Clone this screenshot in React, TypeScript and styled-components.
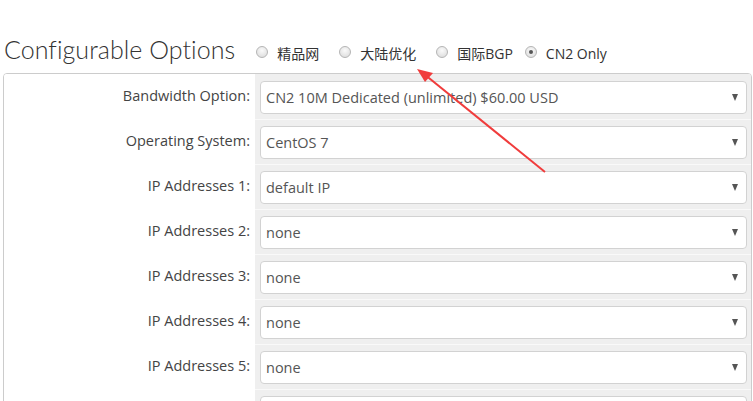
import styled, { createGlobalStyle } from "styled-components";

const GlobalStyle = createGlobalStyle`
  html, body {
    margin: 0;
    padding: 0;
    background: #fff;
    overflow: hidden;
  }
  body {
    font-family: "Open Sans", "Noto Sans CJK SC", sans-serif;
    font-size: 14px;
    color: #333;
  }
`;

const Page = styled.div`
  position: relative;
  width: 753px;
  height: 401px;
  overflow: hidden;
`;

const Header = styled.div`
  display: flex;
  align-items: baseline;
  padding: 37px 0 0 4px;
  height: 73px;
  box-sizing: border-box;
`;

const Title = styled.h3`
  margin: 0 21px 0 0;
  font-family: "Lato", "Liberation Sans", sans-serif;
  font-weight: 300;
  font-size: 25px;
  letter-spacing: 0.05px;
  color: #333;
  line-height: 1;
`;

const RadioLabel = styled.label<{ $gap: number }>`
  display: inline-block;
  margin-right: ${(p) => p.$gap}px;
  font-family: "Open Sans", "Noto Sans CJK SC", sans-serif;
  font-size: 14px;
  color: #333;
  white-space: nowrap;
`;

const RadioDot = styled.span<{ $checked?: boolean }>`
  position: relative;
  display: inline-block;
  vertical-align: 1px;
  width: 12px;
  height: 12px;
  margin-right: 9px;
  box-sizing: border-box;
  border-radius: 50%;
  border: 1px solid #b5b5b5;
  background: radial-gradient(circle at 50% 35%, #fafafa 0%, #dcdcdc 90%);
  &::after {
    content: "";
    position: absolute;
    left: 3px;
    top: 3px;
    width: 4px;
    height: 4px;
    border-radius: 50%;
    background: ${(p) => (p.$checked ? "#555" : "transparent")};
  }
`;

const Panel = styled.div`
  margin: 0 1px 0 3px;
  border: 1px solid #ccc;
  border-radius: 4px;
  display: grid;
  grid-template-columns: 251px 1fr;
  overflow: hidden;
`;

const LabelCell = styled.div`
  height: 45px;
  box-sizing: border-box;
  display: flex;
  align-items: center;
  justify-content: flex-end;
  padding: 0 5px 2px 0;
  background: #fff;
  color: #444;
  font-size: 14.5px;
`;

const FieldCell = styled.div<{ $first?: boolean }>`
  height: 45px;
  box-sizing: border-box;
  background: #efefef;
  border-top: 1px solid ${(p) => (p.$first ? "#efefef" : "#f9f9f9")};
  padding: 6px 4px 0 5px;
`;

const Select = styled.div`
  height: 33px;
  box-sizing: border-box;
  background: #fff;
  border: 1px solid #d2d2d2;
  border-radius: 4px;
  display: flex;
  align-items: center;
  justify-content: space-between;
  padding: 0 8px 0 5px;
  color: #555;
  font-size: 14.5px;
`;

const Caret = styled.span`
  width: 0;
  height: 0;
  border-left: 3.5px solid transparent;
  border-right: 3.5px solid transparent;
  border-top: 7px solid #555;
`;

const ArrowOverlay = styled.svg`
  position: absolute;
  left: 0;
  top: 0;
  pointer-events: none;
`;

const radios = [
  { label: "精品网", gap: 20 },
  { label: "大陆优化", gap: 20 },
  { label: "国际BGP", gap: 12 },
  { label: "CN2 Only", gap: 0, checked: true },
];

const rows = [
  { label: "Bandwidth Option:", value: "CN2 10M Dedicated (unlimited) $60.00 USD" },
  { label: "Operating System:", value: "CentOS 7" },
  { label: "IP Addresses 1:", value: "default IP" },
  { label: "IP Addresses 2:", value: "none" },
  { label: "IP Addresses 3:", value: "none" },
  { label: "IP Addresses 4:", value: "none" },
  { label: "IP Addresses 5:", value: "none" },
  { label: "", value: "" },
];

const App = () => {
  return (
    <Page>
      <GlobalStyle />
      <Header>
        <Title>Configurable Options</Title>
        {radios.map((r) => (
          <RadioLabel key={r.label} $gap={r.gap}>
            <RadioDot $checked={r.checked} />
            {r.label}
          </RadioLabel>
        ))}
      </Header>
      <Panel>
        {rows.map((row, i) => [
          <LabelCell key={i + "l"}>{row.label}</LabelCell>,
          <FieldCell key={i + "f"} $first={i === 0}>
            <Select>
              {row.value}
              <Caret />
            </Select>
          </FieldCell>,
        ])}
      </Panel>
      <ArrowOverlay width="753" height="401" viewBox="0 0 753 401">
        <line x1="545" y1="172" x2="424" y2="74" stroke="#f03c3c" strokeWidth="2" />
        <polygon points="417,69 433,73 425,82" fill="#f03c3c" />
      </ArrowOverlay>
    </Page>
  );
};

export default App;
